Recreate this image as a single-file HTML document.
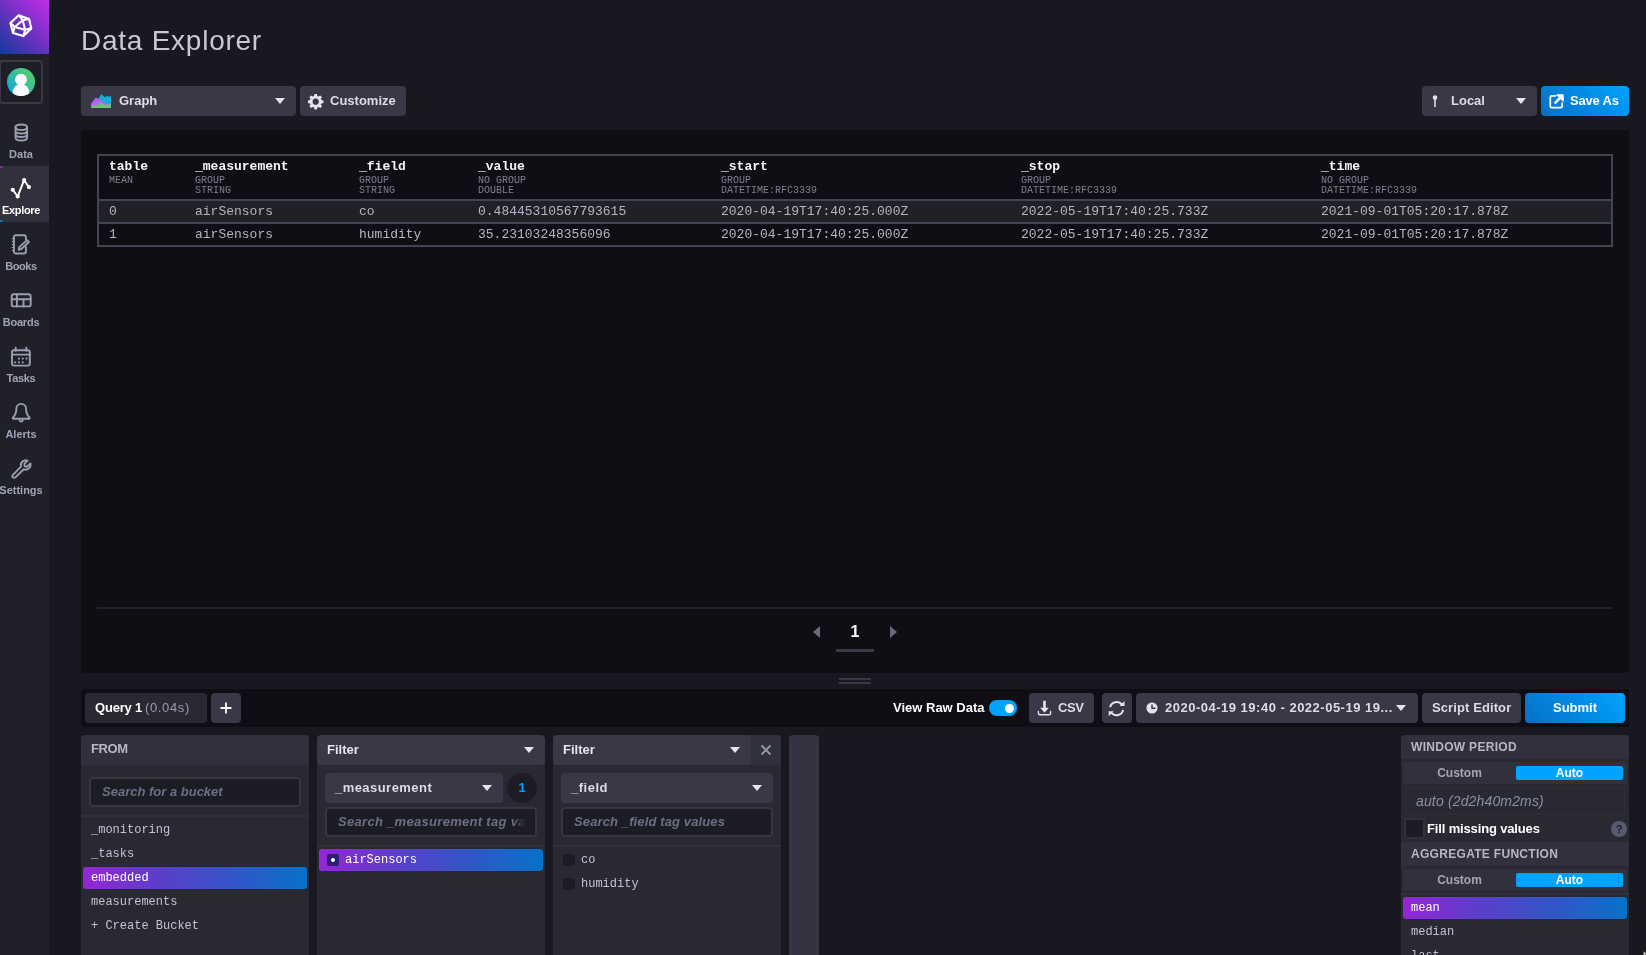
<!DOCTYPE html>
<html lang="en">
<head>
<meta charset="utf-8">
<title>Data Explorer</title>
<style>
*{box-sizing:border-box;margin:0;padding:0}
html,body{width:1646px;height:955px;overflow:hidden;background:#181820}
body{position:relative;font-family:"Liberation Sans",sans-serif;color:#f1f1f3;font-size:13px}
.abs{position:absolute}
.mono{font-family:"Liberation Mono",monospace}
.t{position:absolute;white-space:nowrap;line-height:1}
svg{display:block;position:absolute;overflow:visible}
/* sidebar */
#nav{left:0;top:0;width:49px;height:955px;background:#202028}
#logo{left:0;top:0;width:49px;height:54px;background:linear-gradient(45deg,#0f3a9b 0%,#5a33b8 40%,#9a2ed6 75%,#c030e8 100%)}
#user{left:-1px;top:60px;width:44px;height:44px;border:2px solid #383846;border-radius:4px;background:#1e1e26}
#avatar{left:7px;top:68px;width:28px;height:28px;border-radius:50%;background:linear-gradient(45deg,#0aa5e6 10%,#3dc58a 60%,#62d06a 100%);overflow:hidden}
.ni{left:0;width:49px;height:56px}
.ni .lb{position:absolute;left:-10px;width:62px;text-align:center;top:38px;font-size:11px;line-height:12px;color:#a2a2b6;font-weight:bold}
.ni.act{background:#31313d}
.ni.act .lb{color:#fff}
.ni svg{left:12px;top:9px;width:25px;height:25px;fill:none;stroke:#9d9db0;stroke-width:1.900;stroke-linecap:round;stroke-linejoin:round}
/* buttons */
.btn{position:absolute;height:30px;border-radius:4px;background:#383846;color:#dcdce4;font-weight:bold;font-size:13px}
.btn .t{top:8px;line-height:14px}
.caret{position:absolute;width:0;height:0;border-left:5px solid transparent;border-right:5px solid transparent;border-top:6px solid #e4e4ec}
/* panel */
#panel{left:81px;top:130px;width:1548px;height:543px;background:#0f0e15;border-radius:4px}

/* table */
#tbl{left:97px;top:154px;width:1516px;height:93px;border:2px solid #434453;background:#0f0e15}
#tbl .hl{position:absolute;left:0;width:1512px;height:2px;background:#434453}
#tbl .r0{position:absolute;left:0;top:45px;width:1512px;height:21px;background:#202028}
.th{position:absolute;top:3.500px;font-family:"Liberation Mono",monospace;font-weight:bold;font-size:13px;line-height:13px;color:#f4f4f8;white-space:nowrap}
.sub{position:absolute;top:20px;font-family:"Liberation Mono",monospace;font-size:10px;line-height:10px;color:#7e7e92;white-space:nowrap}
.td{position:absolute;font-family:"Liberation Mono",monospace;font-size:13px;line-height:13px;color:#b4b4c4;white-space:nowrap}
/* query bar */
#qbar{left:81px;top:689px;width:1548px;height:38px;background:#0f0e15;border-radius:4px}
.card{position:absolute;top:735px;height:230px;background:#292933;border-radius:4px;overflow:hidden}
.chead{position:absolute;left:0;top:0;right:0;height:30px;background:#31313d}
.inp{position:absolute;height:30px;border:2px solid #353543;border-radius:4px;background:#1c1c24;overflow:hidden}
.inp .t{top:6px;left:11px;font-style:italic;font-weight:bold;font-size:13px;line-height:14px;color:#6e6e84}
.li{position:absolute;font-family:"Liberation Mono",monospace;font-size:12px;line-height:12px;color:#c2c2d0;white-space:nowrap}
.sel{position:absolute;height:22px;border-radius:3px;background:linear-gradient(90deg,#9426d6 0%,#5a3fc8 35%,#2f58c8 70%,#0672c9 100%)}
.sel .li{color:#fff;top:5px}
.cb{position:absolute;width:12px;height:12px;border-radius:2px;background:#1c1c24}
.tog{position:absolute;left:2px;width:224px;height:22px;border-radius:3px;background:#31313d}
.tog .on{position:absolute;left:113px;top:4px;width:107px;height:14px;border-radius:2px;background:#00a3ff}
.tog .t{font-size:12px;font-weight:bold;line-height:12px;top:5px}
.sep{position:absolute;left:0;right:0;height:2px;background:#31313d}
</style>
</head>
<body>
<div id="root" style="position:absolute;left:0;top:0;width:1646px;height:955px;will-change:transform">
<!-- SIDEBAR -->
<div id="nav" class="abs"></div>
<div id="logo" class="abs"><svg viewBox="0 0 49 54" style="left:0;top:0;width:49px;height:54px;fill:none;stroke:#fff;stroke-width:2.100;stroke-linejoin:round"><path d="M18.700 15.200L29.100 18.900L31.300 28.400L23.400 36.100L13 33.100L10.400 22.900Z"/><path d="M22.700 20.200L14.700 27L25.100 29.700Z"/><path d="M18.700 15.200L22.700 20.200L29.100 18.900M31.300 28.400L25.100 29.700L23.400 36.100M13 33.100L14.700 27L10.400 22.900"/></svg></div>
<div id="user" class="abs"></div>
<div id="avatar" class="abs"><svg viewBox="0 0 28 28" style="left:0;top:0;width:28px;height:28px"><circle cx="14" cy="11.600" r="5.900" fill="#fff"/><ellipse cx="14" cy="25.400" rx="8.400" ry="9.600" fill="#fff"/></svg></div>
<!-- nav items -->
<div class="ni abs" style="top:110px">
<svg viewBox="0 0 49 56" style="left:0;top:0;width:49px;height:56px"><ellipse cx="21.3" cy="17.2" rx="5.8" ry="2.7"/><path d="M15.5 17.2v10.6c0 1.5 2.6 2.7 5.8 2.7s5.8-1.2 5.8-2.7V17.2M15.5 20.8c0 1.5 2.6 2.7 5.8 2.7s5.8-1.2 5.8-2.7M15.5 24.3c0 1.5 2.6 2.7 5.8 2.7s5.8-1.2 5.8-2.7"/></svg>
<div class="lb">Data</div></div>
<div class="ni act abs" style="top:166px">
<div class="abs" style="left:0;top:0;width:4px;height:2px;background:linear-gradient(90deg,rgba(190,46,228,.8),rgba(190,46,228,0))"></div>
<div class="abs" style="left:0;top:54px;width:4px;height:2px;background:linear-gradient(90deg,rgba(0,163,255,.8),rgba(0,163,255,0))"></div>
<svg viewBox="0 0 49 56" style="left:0;top:0;width:49px;height:56px;stroke:#fff;stroke-width:1.9"><path d="M12.7 23.8L17.7 30.4L24.1 14.1L28.9 21.1"/><g fill="#fff" stroke="none"><circle cx="12.7" cy="23.8" r="2.1"/><circle cx="17.7" cy="30.4" r="2.1"/><circle cx="24.1" cy="14.1" r="2.1"/><circle cx="28.9" cy="21.1" r="2.1"/></g></svg>
<div class="lb" style="letter-spacing:-.3px">Explore</div></div>
<div class="ni abs" style="top:222px">
<svg viewBox="0 0 49 56" style="left:0;top:0;width:49px;height:56px"><path d="M25.900 17.400v-2.300a1.900 1.900 0 0 0-1.900-1.900H15.800a1.900 1.900 0 0 0-1.900 1.900v14.500a1.900 1.900 0 0 0 1.900 1.900h8.200a1.900 1.900 0 0 0 1.900-1.900v-4.600"/><path d="M12.300 16.500h1.600M12.300 19.500h1.600M12.300 22.500h1.600M12.300 25.500h1.600M12.300 28.500h1.600" stroke-width="1.200"/><path d="M27 18.100l1.900 1.900l-7.600 7l-2.700 .8l.7-2.700z"/></svg>
<div class="lb" style="letter-spacing:-.45px">Books</div></div>
<div class="ni abs" style="top:278px">
<svg viewBox="0 0 49 56" style="left:0;top:0;width:49px;height:56px"><rect x="11.700" y="16.200" width="19" height="12.200" rx="2"/><path d="M11.700 21.300h19M16.900 16.200v12.200M23.500 21.300v7.100"/></svg>
<div class="lb" style="letter-spacing:-.2px">Boards</div></div>
<div class="ni abs" style="top:334px">
<svg viewBox="0 0 49 56" style="left:0;top:0;width:49px;height:56px"><rect x="12" y="16.200" width="17.800" height="15.400" rx="2"/><path d="M12 20.600h17.800M15.700 13.600v3.200M26.300 13.600v3.200"/><g fill="#9d9db0" stroke="none"><rect x="18" y="23.6" width="1.9" height="1.9"/><rect x="21.8" y="23.6" width="1.9" height="1.9"/><rect x="25.6" y="23.6" width="1.9" height="1.9"/><rect x="14.2" y="27.4" width="1.9" height="1.9"/><rect x="18" y="27.4" width="1.9" height="1.9"/><rect x="21.8" y="27.4" width="1.9" height="1.9"/></g></svg>
<div class="lb" style="letter-spacing:-.3px">Tasks</div></div>
<div class="ni abs" style="top:390px">
<svg viewBox="0 0 49 56" style="left:0;top:0;width:49px;height:56px"><path d="M21.200 13.900c-3 0-4.900 2.200-4.900 5.200c0 4.800-1.400 6.600-3.300 8.400c-.5 .500-.2 1.300 .6 1.300h15.200c.8 0 1.100-.8 .600-1.300c-1.900-1.800-3.300-3.600-3.300-8.400c0-3-1.900-5.200-4.900-5.200z"/><path d="M19.600 30.500a1.700 1.700 0 0 0 3.200 0"/></svg>
<div class="lb">Alerts</div></div>
<div class="ni abs" style="top:446px">
<svg viewBox="0 0 49 56" style="left:0;top:0;width:49px;height:56px"><path d="M27.6 14.6l-3.300 3.300l.4 2.400l2.400 .4l3.300-3.300a5 5 0 0 1-6.700 5.900l-8.300 8.100a1.750 1.750 0 0 1-2.500-2.500l8.100-8.300a5 5 0 0 1 6.600-6z"/></svg>
<div class="lb">Settings</div></div>


<!-- HEADER -->
<div class="t" id="title" style="left:81px;top:26.500px;font-size:28px;color:#c8c8d6;letter-spacing:.75px">Data Explorer</div>

<!-- PANEL -->
<div id="panel" class="abs"></div>
<!-- TOOLBAR -->
<div class="btn" style="left:81px;top:86px;width:215px">
<svg viewBox="0 0 20 14" style="left:10px;top:8px;width:20px;height:14px"><path d="M7.500 5L10.200 .100L13.800 3.300L16.400 1.800L17.900 2.800L20 2V10H7.500Z" fill="#0fb0dc"/><path d="M0 9.500L4.700 3.600L6.600 4.600L8.400 4.400L11.700 7.300L14.600 10.200L18.200 9.500L20 9.100V12H0Z" fill="#b659e8"/><path d="M0 11L4.500 7.500L8.500 6L11.700 7.300L14.600 10.200L18.200 9.500L20 9.100V12H0Z" fill="#b06cf2"/><path d="M0 12.200L5.800 11.300L10.200 8.700L14.200 11.300L17.500 10.600L20 10.200V14H0Z" fill="#67c66f"/><path d="M0 13.200H20V14H0Z" fill="#7fbf8a"/></svg>
<div class="t" style="left:38px">Graph</div><div class="caret" style="left:194px;top:12px"></div></div>
<div class="btn" style="left:300px;top:86px;width:106px">
<svg viewBox="0 0 16 16" style="left:8.300px;top:7.600px;width:15.400px;height:15.400px"><path fill="#e4e4ec" fill-rule="evenodd" d="M6.700 0h2.600l.4 2.100l1.300 .55l1.800-1.200l1.800 1.800l-1.200 1.800l.55 1.300l2.100 .4v2.600l-2.100 .4l-.55 1.300l1.200 1.800l-1.800 1.800l-1.800-1.200l-1.300 .55l-.4 2.100h-2.600l-.4-2.100l-1.300-.55l-1.800 1.200l-1.800-1.800l1.200-1.800l-.55-1.300l-2.100-.4v-2.600l2.100-.4l.55-1.300l-1.200-1.800l1.800-1.800l1.800 1.200l1.300-.55zM8 4.800a3.200 3.200 0 1 0 0 6.400a3.200 3.200 0 0 0 0-6.400z"/></svg>
<div class="t" style="left:30px">Customize</div></div>
<div class="btn" style="left:1422px;top:86px;width:115px">
<svg viewBox="0 0 6 12" style="left:10px;top:9px;width:6px;height:12px"><circle cx="3" cy="2.600" r="2.300" fill="#e4e4ec"/><path d="M3 3v8.500" stroke="#e4e4ec" stroke-width="1.500" stroke-linecap="round"/></svg>
<div class="t" style="left:29px">Local</div><div class="caret" style="left:94px;top:12px"></div></div>
<div class="btn" style="left:1541px;top:86px;width:88px;background:linear-gradient(45deg,#066fc5,#00a3ff);color:#fff">
<svg viewBox="0 0 15 15" style="left:8px;top:8px;width:15px;height:15px;fill:none;stroke:#fff;stroke-width:1.700;stroke-linejoin:round;stroke-linecap:round"><path d="M6.500 1.800H2.800a1.500 1.500 0 0 0-1.500 1.500v8.900a1.500 1.500 0 0 0 1.500 1.500h8.900a1.500 1.500 0 0 0 1.500-1.500V9"/><path d="M6.400 8.600L12 3" stroke-width="2.600"/><path d="M8 .800H14.200V7Z" fill="#fff" stroke-width="1"/></svg>
<div class="t" style="left:29px;letter-spacing:-.2px">Save As</div></div>

<!-- TABLE -->
<div id="tbl" class="abs">
<div class="r0"></div>
<div class="hl" style="top:43px"></div><div class="hl" style="top:66px"></div>
<div class="th" style="left:10px">table</div><div class="sub" style="left:10px">MEAN</div>
<div class="th" style="left:96px">_measurement</div><div class="sub" style="left:96px">GROUP<br>STRING</div>
<div class="th" style="left:260px">_field</div><div class="sub" style="left:260px">GROUP<br>STRING</div>
<div class="th" style="left:379px">_value</div><div class="sub" style="left:379px">NO GROUP<br>DOUBLE</div>
<div class="th" style="left:622px">_start</div><div class="sub" style="left:622px">GROUP<br>DATETIME:RFC3339</div>
<div class="th" style="left:922px">_stop</div><div class="sub" style="left:922px">GROUP<br>DATETIME:RFC3339</div>
<div class="th" style="left:1222px">_time</div><div class="sub" style="left:1222px">NO GROUP<br>DATETIME:RFC3339</div>
<div class="td" style="left:10px;top:49px">0</div><div class="td" style="left:96px;top:49px">airSensors</div><div class="td" style="left:260px;top:49px">co</div><div class="td" style="left:379px;top:49px">0.48445310567793615</div><div class="td" style="left:622px;top:49px">2020-04-19T17:40:25.000Z</div><div class="td" style="left:922px;top:49px">2022-05-19T17:40:25.733Z</div><div class="td" style="left:1222px;top:49px">2021-09-01T05:20:17.878Z</div>
<div class="td" style="left:10px;top:72px">1</div><div class="td" style="left:96px;top:72px">airSensors</div><div class="td" style="left:260px;top:72px">humidity</div><div class="td" style="left:379px;top:72px">35.23103248356096</div><div class="td" style="left:622px;top:72px">2020-04-19T17:40:25.000Z</div><div class="td" style="left:922px;top:72px">2022-05-19T17:40:25.733Z</div><div class="td" style="left:1222px;top:72px">2021-09-01T05:20:17.878Z</div>
</div>

<!-- PAGINATION -->
<div class="abs" style="left:97px;top:607px;width:1516px;height:2px;background:#22222c"></div>
<div class="abs" style="left:813px;top:625.500px;width:0;height:0;border-top:6.500px solid transparent;border-bottom:6.500px solid transparent;border-right:7.500px solid #6a6a7e"></div>
<div class="abs" style="left:890px;top:625.500px;width:0;height:0;border-top:6.500px solid transparent;border-bottom:6.500px solid transparent;border-left:7.500px solid #6a6a7e"></div>
<div class="t" style="left:835px;width:40px;text-align:center;top:624px;font-size:16px;line-height:16px;font-weight:bold;color:#fff">1</div>
<div class="abs" style="left:836px;top:649px;width:38px;height:3px;background:#383846"></div>
<!-- resize handle -->
<div class="abs" style="left:839px;top:678px;width:32px;height:2px;background:#383846"></div>
<div class="abs" style="left:839px;top:682px;width:32px;height:2px;background:#383846"></div>

<!-- QUERY BAR -->
<div id="qbar" class="abs"></div>
<div class="abs" style="left:85px;top:693px;width:122px;height:30px;border-radius:4px;background:#292933"></div>
<div class="t" style="left:95px;top:701px;font-size:13px;line-height:14px;font-weight:bold;letter-spacing:-.2px;color:#fff">Query 1 <span style="color:#9a9aac;font-weight:normal;letter-spacing:.65px;margin-left:-.5px">(0.04s)</span></div>
<div class="btn" style="left:211px;top:693px;width:30px"><svg viewBox="0 0 12 12" style="left:9px;top:9px;width:12px;height:12px"><path d="M6 .500v11M.500 6h11" stroke="#fff" stroke-width="1.800"/></svg></div>
<div class="t" style="left:893px;top:701px;font-size:13px;line-height:14px;font-weight:bold;color:#fff">View Raw Data</div>
<div class="abs" style="left:989px;top:700px;width:28px;height:16px;border-radius:8px;background:#00a3ff"></div>
<div class="abs" style="left:1004.500px;top:703.500px;width:9px;height:9px;border-radius:50%;background:#fff"></div>
<div class="btn" style="left:1029px;top:693px;width:65px"><svg viewBox="0 0 30 30" style="left:0;top:0;width:30px;height:30px"><path d="M14.200 7.800h2.600v7h3L15.500 19.800L11.200 14.800h3z" fill="#e4e4ec"/><path d="M9.400 18.400v1.900a1.500 1.500 0 0 0 1.500 1.500h9.200a1.500 1.500 0 0 0 1.500-1.500v-1.900" fill="none" stroke="#e4e4ec" stroke-width="1.400" stroke-linecap="round"/></svg><div class="t" style="left:29px;letter-spacing:-.4px">CSV</div></div>
<div class="btn" style="left:1102px;top:693px;width:30px"><svg viewBox="0 0 30 30" style="left:0;top:0;width:30px;height:30px"><path d="M8.100 14.300A6.600 6.600 0 0 1 19.900 11.700M21.100 16.900A6.600 6.600 0 0 1 9.300 19.500" fill="none" stroke="#e4e4ec" stroke-width="2"/><path d="M22.500 8v5h-5zM6.700 23.200v-5h5z" fill="#e4e4ec"/></svg></div>
<div class="btn" style="left:1136px;top:693px;width:282px"><svg viewBox="0 0 12 12" style="left:10px;top:9px;width:12px;height:12px"><circle cx="6" cy="6" r="5.600" fill="#e4e4ec"/><path d="M6 2.600V6.300H9.400" stroke="#333342" stroke-width="1.400" fill="none"/></svg><div class="t" style="left:29px;letter-spacing:.5px">2020-04-19 19:40 - 2022-05-19 19...</div><div class="caret" style="left:260px;top:12px"></div></div>
<div class="btn" style="left:1422px;top:693px;width:99px"><div class="t" style="left:10px;letter-spacing:.1px">Script Editor</div></div>
<div class="btn" style="left:1525px;top:693px;width:100px;background:linear-gradient(45deg,#066fc5,#00a3ff);color:#fff"><div class="t" style="left:0;width:100px;text-align:center">Submit</div></div>

<!-- FROM CARD -->
<div class="card" style="left:81px;width:228px">
<div class="chead"><div class="t" style="left:10px;top:7px;font-size:13px;line-height:13px;font-weight:bold;color:#b6b6c6;letter-spacing:-.4px">FROM</div></div>
<div class="inp" style="left:8px;top:42px;width:212px"><div class="t">Search for a bucket</div></div>
<div class="sep" style="top:80px"></div>
<div class="li" style="left:10px;top:89px">_monitoring</div>
<div class="li" style="left:10px;top:113px">_tasks</div>
<div class="sel" style="left:2px;top:132px;width:224px"><div class="li" style="left:8px">embedded</div></div>
<div class="li" style="left:10px;top:161px">measurements</div>
<div class="li" style="left:10px;top:185px">+ Create Bucket</div>
</div>

<!-- FILTER 1 -->
<div class="card" style="left:317px;width:228px">
<div class="chead" style="background:#383846;border-radius:4px"><div class="t" style="left:10px;top:8px;font-size:13px;line-height:14px;font-weight:bold;color:#e4e4ec">Filter</div><div class="caret" style="left:207px;top:12px"></div></div>
<div class="btn" style="left:8px;top:38px;width:178px"><div class="t" style="left:10px;letter-spacing:.45px">_measurement</div><div class="caret" style="left:157px;top:12px"></div></div>
<div class="abs" style="left:190px;top:38px;width:30px;height:30px;border-radius:50%;background:#1c1c24"></div>
<div class="t" style="left:190px;width:30px;text-align:center;top:46px;font-size:13px;line-height:14px;font-weight:bold;color:#00a3ff">1</div>
<div class="inp" style="left:8px;top:72px;width:212px"><div class="t" style="letter-spacing:.3px">Search _measurement tag values</div><div class="abs" style="right:0;top:0;width:22px;height:26px;background:linear-gradient(90deg,rgba(28,28,36,0),#1c1c24 60%)"></div></div>
<div class="sep" style="top:110px"></div>
<div class="sel" style="left:2px;top:114px;width:224px"><div class="cb" style="left:8px;top:5px;background:#2b1f7a"></div><div class="abs" style="left:12px;top:9px;width:4px;height:4px;border-radius:50%;background:#fff"></div><div class="li" style="left:26px">airSensors</div></div>
</div>

<!-- FILTER 2 -->
<div class="card" style="left:553px;width:228px;background:#292933">
<div class="chead"></div>
<div class="chead" style="background:#383846;right:30px;border-radius:4px"><div class="t" style="left:10px;top:8px;font-size:13px;line-height:14px;font-weight:bold;color:#e4e4ec">Filter</div><div class="caret" style="left:177px;top:12px"></div></div>
<svg viewBox="0 0 10 10" style="left:208px;top:10px;width:10px;height:10px"><path d="M.500 .500l9 9M9.500 .500l-9 9" stroke="#9494a8" stroke-width="2"/></svg>
<div class="btn" style="left:8px;top:38px;width:212px"><div class="t" style="left:10px;letter-spacing:.5px">_field</div><div class="caret" style="left:191px;top:12px"></div></div>
<div class="inp" style="left:8px;top:72px;width:212px"><div class="t" style="letter-spacing:.12px">Search _field tag values</div></div>
<div class="sep" style="top:110px"></div>
<div class="cb" style="left:10px;top:119px"></div><div class="li" style="left:28px;top:119px">co</div>
<div class="cb" style="left:10px;top:143px"></div><div class="li" style="left:28px;top:143px">humidity</div>
</div>

<!-- EMPTY CARD -->
<div class="card" style="left:789px;width:30px;background:#333342"></div>

<!-- WINDOW CARD -->
<div class="card" style="left:1401px;width:228px">
<div class="chead" style="height:24px"><div class="t" style="left:10px;top:6px;font-size:12px;line-height:12px;font-weight:bold;color:#b6b6c6;letter-spacing:.3px">WINDOW PERIOD</div></div>
<div class="tog" style="top:27px"><div class="on"></div><div class="t" style="left:0;width:113px;text-align:center;color:#a4a4b6">Custom</div><div class="t" style="left:113px;width:107px;text-align:center;color:#fff">Auto</div></div>
<div class="inp" style="left:3px;top:52px;width:222px;height:28px;background:#292933;border-color:#2d2d38"><div class="t" style="left:10px;top:5px;font-weight:normal;font-size:14px;letter-spacing:.15px;color:#8e8ea2">auto (2d2h40m2ms)</div></div>
<div class="abs" style="left:3px;top:83px;width:21px;height:21px;border-radius:3px;border:2px solid #31313d;background:#1c1c24"></div>
<div class="t" style="left:26px;top:87px;font-size:13px;line-height:14px;font-weight:bold;letter-spacing:-.15px;color:#fff">Fill missing values</div>
<div class="abs" style="left:210px;top:86px;width:16px;height:16px;border-radius:50%;background:#5a5a6e"></div>
<div class="t" style="left:210px;width:16px;text-align:center;top:88px;font-size:11px;line-height:12px;font-weight:bold;color:#1c1c24">?</div>
<div class="chead" style="top:107px;height:24px"><div class="t" style="left:10px;top:6px;font-size:12px;line-height:12px;font-weight:bold;color:#b6b6c6;letter-spacing:.3px">AGGREGATE FUNCTION</div></div>
<div class="tog" style="top:134px"><div class="on"></div><div class="t" style="left:0;width:113px;text-align:center;color:#a4a4b6">Custom</div><div class="t" style="left:113px;width:107px;text-align:center;color:#fff">Auto</div></div>
<div class="sep" style="top:158px"></div>
<div class="sel" style="left:2px;top:162px;width:224px"><div class="li" style="left:8px">mean</div></div>
<div class="li" style="left:10px;top:191px">median</div>
<div class="li" style="left:10px;top:215px">last</div>
</div>

<svg viewBox="0 0 4 5" style="left:1642px;top:950px;width:4px;height:5px"><path d="M1.300 1L4 3.200V5H1.300Z" fill="#fff" stroke="#111" stroke-width=".6"/></svg>
</div>
</body>
</html>
